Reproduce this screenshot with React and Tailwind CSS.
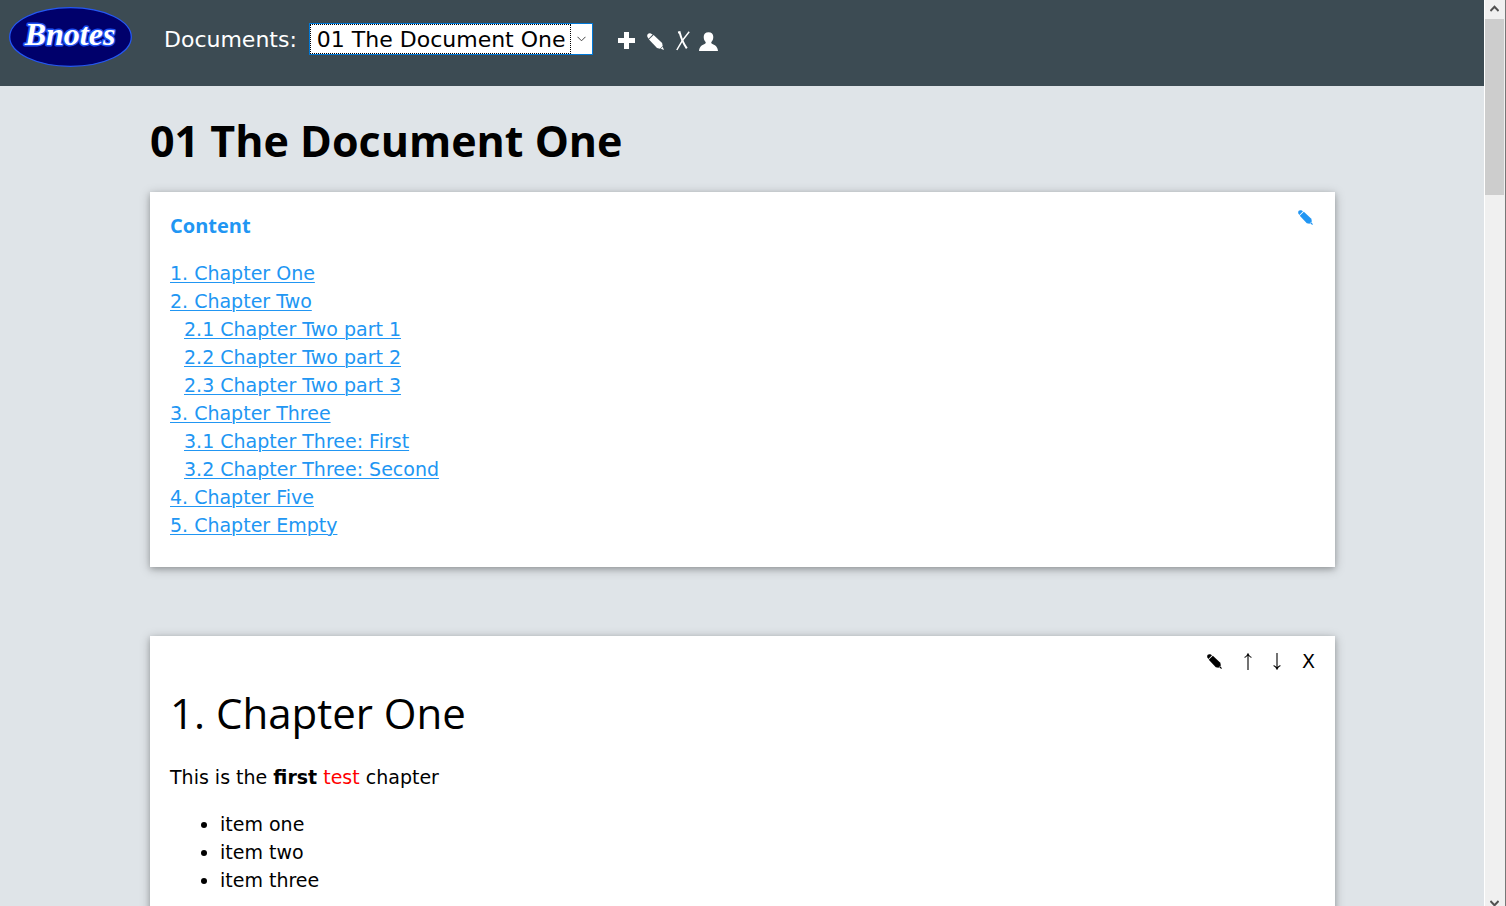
const contents = [
  { label: "1. Chapter One" },
  { label: "2. Chapter Two" },
  { label: "2.1 Chapter Two part 1", sub: true },
  { label: "2.2 Chapter Two part 2", sub: true },
  { label: "2.3 Chapter Two part 3", sub: true },
  { label: "3. Chapter Three" },
  { label: "3.1 Chapter Three: First", sub: true },
  { label: "3.2 Chapter Three: Second", sub: true },
  { label: "4. Chapter Five" },
  { label: "5. Chapter Empty" },
];

const items = ["item one", "item two", "item three"];

function Logo() {
  return (
    <svg className="h-[62px] w-[124px]" viewBox="0 0 124 62" role="img" aria-label="Bnotes">
      <ellipse cx="62.5" cy="31" rx="60.8" ry="29.3" fill="#00006b" stroke="#2457f5" strokeWidth="1.3" />
      <text
        x="62"
        y="39"
        textAnchor="middle"
        className="font-['Liberation_Serif',serif] text-[32px] font-bold italic"
        fill="#fff"
        stroke="#1f50f0"
        strokeWidth="3"
        strokeLinejoin="round"
        paintOrder="stroke"
      >
        Bnotes
      </text>
    </svg>
  );
}

function Pencil({ className }) {
  return (
    <svg className={className} viewBox="0 0 18 18" fill="currentColor" aria-hidden="true">
      <path d="M0.4 4 C-0.4 1.4 1.4 -0.4 4 0.4 L6 1.6 L1.6 6 Z" />
      <path d="M7 2.1 L16 10.6 L16.6 13.8 L13.8 16.6 L10.6 16 L2.1 7 Z" />
      <path d="M16.6 14.6 L18 18 L14.6 16.6 Z" />
    </svg>
  );
}

function Plus() {
  return (
    <svg className="size-[18px]" viewBox="0 0 18 18" fill="currentColor" aria-hidden="true">
      <path d="M6 0h5v6h6v5h-6v6H6v-6H0V6h6z" />
    </svg>
  );
}

function BallotX() {
  return (
    <svg className="h-5 w-[14px]" viewBox="0 0 14 20" fill="none" stroke="currentColor" aria-hidden="true">
      <path d="M2 1.4 L3.6 1.2 C5 6.5 7 12 10.8 17.4" strokeWidth="2" />
      <path d="M13.2 0.8 C9 5.5 4.5 12 0.8 19" strokeWidth="1.5" />
    </svg>
  );
}

function Person() {
  return (
    <svg className="h-5 w-[19px]" viewBox="0 0 19 20" fill="currentColor" aria-hidden="true">
      <path d="M9.5 1.2 C12.6 1.2 14.3 3.2 14.3 6 C14.3 8.3 13.4 9.8 12.4 11 C12 12 12.4 12.5 13.4 13 C16.2 14.2 18.6 15.6 19 20 H0 C0.4 15.6 2.8 14.2 5.6 13 C6.6 12.5 7 12 6.6 11 C5.6 9.8 4.7 8.3 4.7 6 C4.7 3.2 6.4 1.2 9.5 1.2 Z" />
    </svg>
  );
}

function Arrow({ down }) {
  return (
    <svg
      className={down ? "h-[17px] w-2 rotate-180" : "h-[17px] w-2"}
      viewBox="0 0 8 17"
      fill="none"
      stroke="currentColor"
      strokeWidth="1.1"
      aria-hidden="true"
    >
      <path d="M4 17V1.2M0.6 4.6C2.4 3.8 3.4 2.4 4 0.9C4.6 2.4 5.6 3.8 7.4 4.6" />
    </svg>
  );
}

function ScrollBar() {
  return (
    <div className="flex w-[22px] shrink-0 flex-col items-stretch border-l border-r border-l-white border-r-[#777] bg-[#f0f0f0]">
      <button type="button" aria-label="Scroll up" className="flex h-[19px] justify-center pr-px pt-[5px] text-[#505050]">
        <svg className="h-[7px] w-[9px]" viewBox="0 0 9 7" fill="none" stroke="currentColor" strokeWidth="2">
          <path d="M0.4 6L4.5 1.7L8.6 6" />
        </svg>
      </button>
      <div className="mr-px h-44 bg-[#cdcdcd]" />
      <button type="button" aria-label="Scroll down" className="mt-auto flex h-[6px] justify-center pr-px text-[#505050]">
        <svg className="h-[7px] w-[9px]" viewBox="0 0 9 7" fill="none" stroke="currentColor" strokeWidth="2">
          <path d="M0.4 1L4.5 5.3L8.6 1" />
        </svg>
      </button>
    </div>
  );
}

export default function App() {
  return (
    <div className="flex h-screen overflow-hidden bg-[#dfe4e8] font-['DejaVu_Sans',sans-serif] text-[19px] leading-7 text-black">
      <div className="min-w-0 flex-1 overflow-hidden">
        <header className="flex h-[86px] items-start bg-[#3c4b53] pl-2 text-white">
          <a href="#home" className="mt-[6px]">
            <Logo />
          </a>
          <label htmlFor="document" className="ml-8 mt-6 text-[22px] leading-8">
            Documents:
          </label>
          <div className="ml-3 mt-[23px] flex h-8 items-center border border-[#0078d7] bg-white text-black">
            <select
              id="document"
              defaultValue="one"
              className="h-[30px] w-[261px] appearance-none rounded-none border border-dotted border-black bg-white pl-[6px] pt-px text-[22px] leading-7 outline-none"
            >
              <option value="one">01 The Document One</option>
            </select>
            <svg className="mx-[6px] h-[6px] w-[9px]" viewBox="0 0 9 6" fill="none" stroke="#444" aria-hidden="true">
              <path d="M0.5 0.8L4.5 4.8L8.5 0.8" />
            </svg>
          </div>
          <div className="ml-[25px] mt-[31px] flex h-5 items-center">
            <button type="button" aria-label="Add document">
              <Plus />
            </button>
            <button type="button" aria-label="Edit document" className="ml-[11px]">
              <Pencil className="size-[17px]" />
            </button>
            <button type="button" aria-label="Delete document" className="ml-3">
              <BallotX />
            </button>
            <button type="button" aria-label="Account" className="ml-[9px]">
              <Person />
            </button>
          </div>
        </header>

        <main className="pl-[150px] pr-[149px] pt-6">
          <h1 className="font-['Open_Sans',sans-serif] text-[43px] font-bold leading-[62px]">01 The Document One</h1>

          <section className="mt-5 bg-white px-5 pb-7 pt-5 text-[#2196f3] shadow-[0_2px_5px_0_rgba(0,0,0,0.16),0_2px_10px_0_rgba(0,0,0,0.26)]">
            <div className="flex items-start justify-between">
              <h2 className="font-['Open_Sans',sans-serif] text-[20px] font-bold leading-7">Content</h2>
              <button type="button" aria-label="Edit content" className="-mt-0.5 mr-[2px]">
                <Pencil className="size-[15px]" />
              </button>
            </div>
            <ul className="mt-[19px]">
              {contents.map((c) => (
                <li key={c.label} className={c.sub ? "pl-[14px]" : ""}>
                  <a href="#chapter" className="underline decoration-[#2196f3] decoration-1 underline-offset-2">
                    {c.label}
                  </a>
                </li>
              ))}
            </ul>
          </section>

          <section
            id="chapter"
            className="mt-[69px] bg-white px-5 pb-8 pt-4 shadow-[0_2px_5px_0_rgba(0,0,0,0.16),0_2px_10px_0_rgba(0,0,0,0.26)]"
          >
            <div className="flex h-[18px] items-center justify-end">
              <button type="button" aria-label="Edit chapter">
                <Pencil className="size-[15px]" />
              </button>
              <button type="button" aria-label="Move chapter up" className="ml-[22px]">
                <Arrow />
              </button>
              <button type="button" aria-label="Move chapter down" className="ml-[21px]">
                <Arrow down />
              </button>
              <button type="button" className="ml-[21px] leading-[18px]">
                X
              </button>
            </div>
            <h2 className="mt-3 font-['Open_Sans',sans-serif] text-[42px] leading-[62px]">1. Chapter One</h2>
            <p className="mt-[19px]">
              This is the <b>first</b> <span className="text-[#ff0000]">test</span> chapter
            </p>
            <ul className="mt-[19px] list-disc pl-[50px]">
              {items.map((item) => (
                <li key={item}>{item}</li>
              ))}
            </ul>
          </section>
        </main>
      </div>
      <ScrollBar />
    </div>
  );
}
